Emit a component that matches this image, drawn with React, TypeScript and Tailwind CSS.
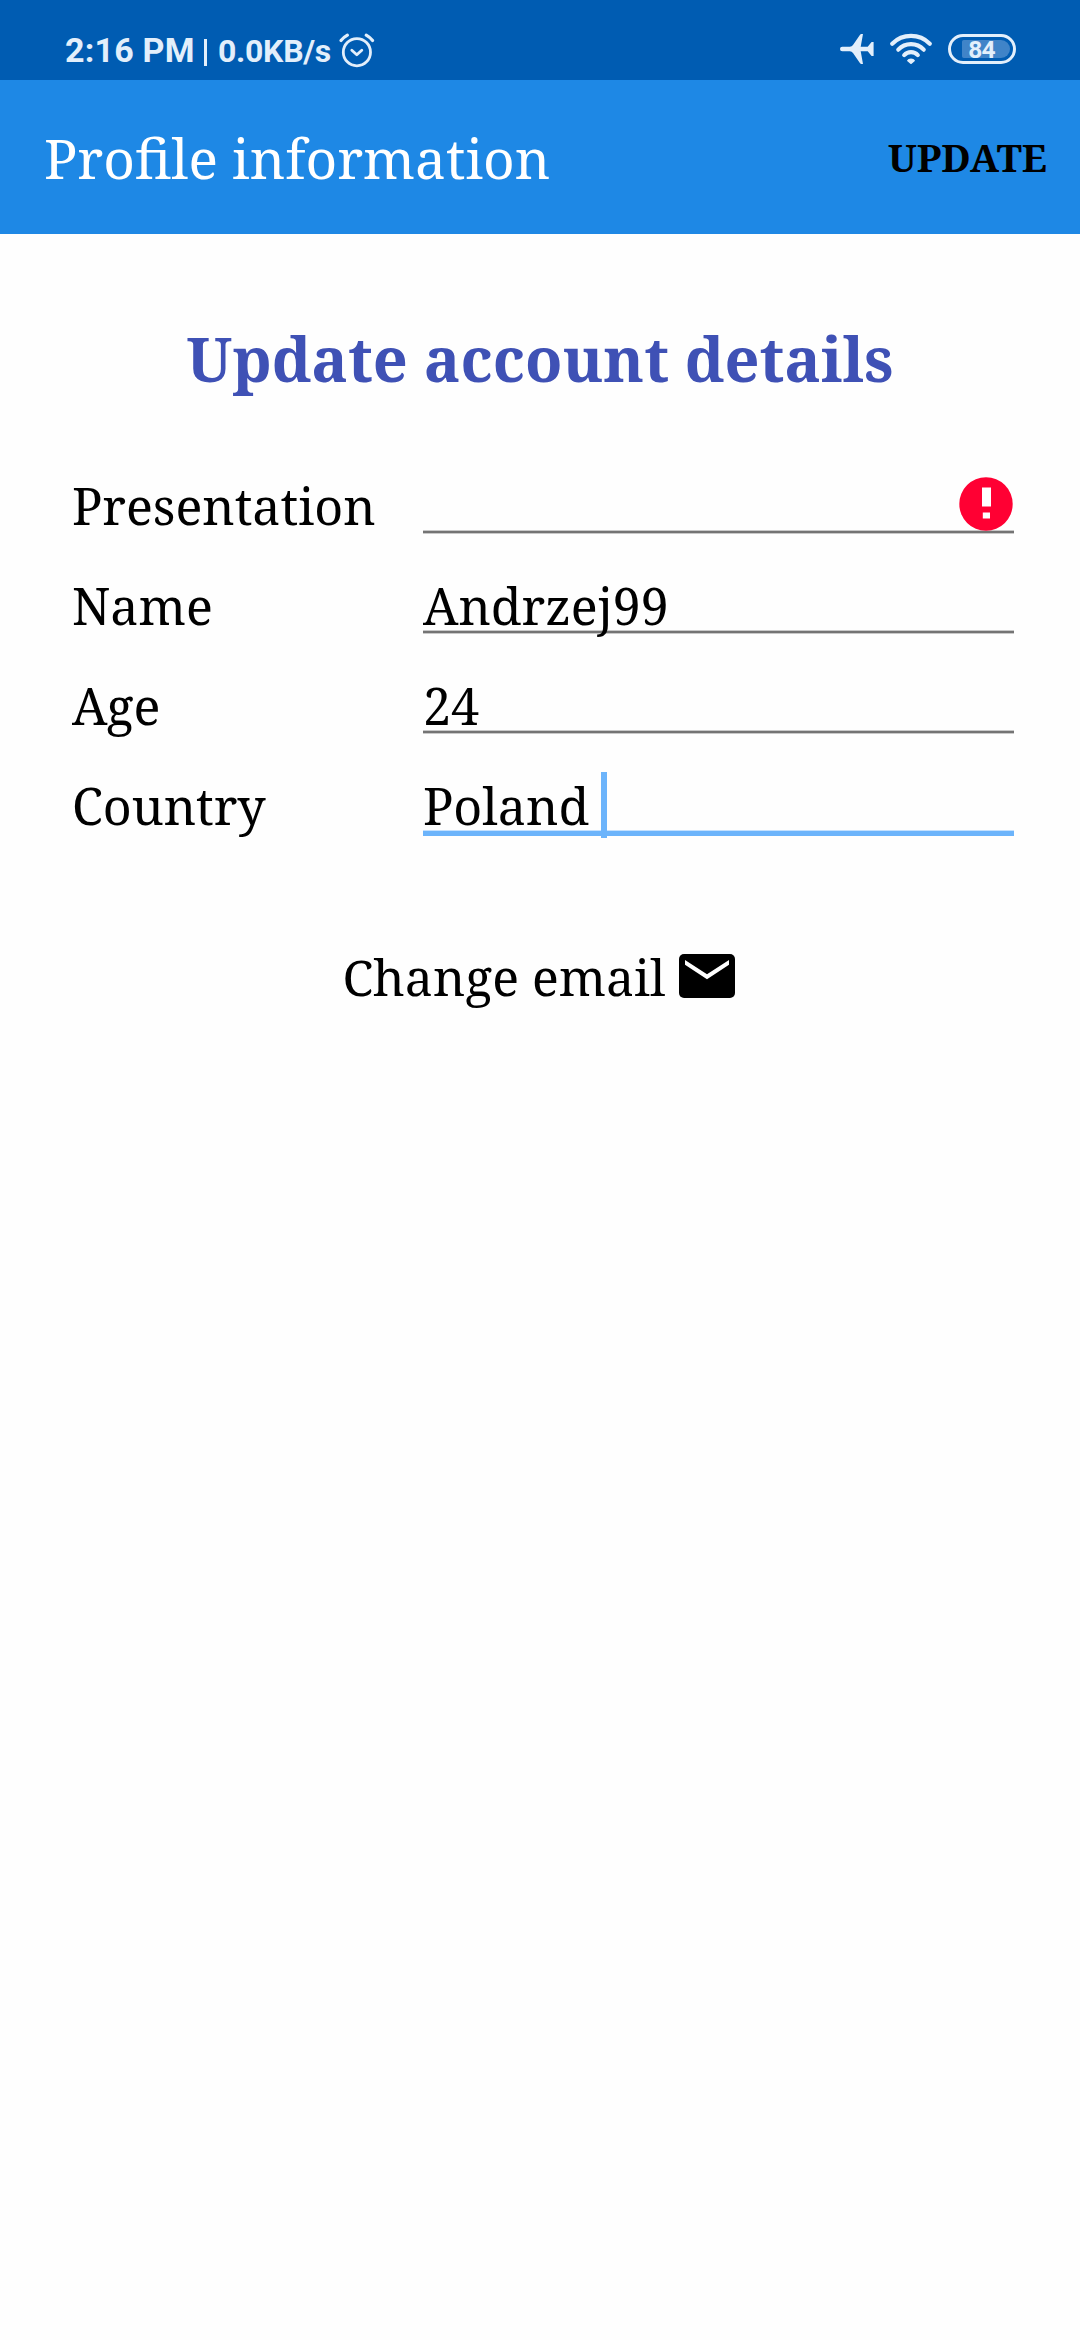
import type { ReactNode } from "react";

function AlarmIcon() {
  return (
    <svg className="h-[38px] w-[38px]" viewBox="0 0 38 38" fill="none" stroke="#e3effb" strokeLinecap="round" strokeLinejoin="round">
      <circle cx="18.9" cy="21.2" r="13.6" strokeWidth="2.8" />
      <path d="M13.8 19.2l5 4.6 5-4.6" strokeWidth="2.8" />
      <path d="M3 9.6a21 21 0 0 1 6.4-5.4M34.6 9.6a21 21 0 0 0-6.4-5.4" strokeWidth="3.2" />
    </svg>
  );
}

function PlaneIcon() {
  return (
    <svg className="h-[32px] w-[36px]" viewBox="0 0 36 32" fill="#e3effb">
      <path d="M3.300 13.700h7.500q2 0 3.200-1.800L20.700 2.200q.8-1.200 1.800-1.200h1.500l-2.300 12.700h7L32.600 9h2v14h-2l-3.900-4.700h-7L24 31h-1.500q-1 0-1.800-1.200L14 20.100q-1.200-1.800-3.200-1.800H3.300a2.300 2.300 0 0 1 0-4.600z" />
    </svg>
  );
}

function WifiIcon() {
  return (
    <svg className="h-[32px] w-[44px]" viewBox="0 0 44 32" fill="none" stroke="#e3effb" strokeWidth="4.200" strokeLinecap="round">
      <path d="M3.200 10.700a26.600 26.600 0 0 1 37.600 0" />
      <path d="M9.300 16.700a17.200 17.200 0 0 1 25.400 0" />
      <path d="M15.200 22.100a9.400 9.400 0 0 1 13.600 0" />
      <path d="M22 30l-2.900-2.400c.8-1.600 5-1.600 5.800 0z" fill="#e3effb" strokeWidth="2" strokeLinejoin="round" />
    </svg>
  );
}

function Battery() {
  return (
    <div className="relative mt-px h-[30px] w-[68px] rounded-full border-[3px] border-[#e3effb]">
      <div className="absolute top-[3px] left-[11px] h-[18px] w-[48px] rounded-l-[2px] rounded-r-[10px] bg-[#4084c8]" />
      <div className="absolute inset-0 pr-px text-center text-[24.5px] leading-[25px] font-bold tracking-[-0.8px]">84</div>
    </div>
  );
}

function ErrorIcon() {
  return (
    <svg className="mt-[21px] mr-px ml-auto h-[54px] w-[54px]" viewBox="0 0 54 54">
      <circle cx="27" cy="27" r="26.700" fill="#ff0033" />
      <path d="M23 10.500h9v19h-9zM23.800 35.500h7.200v6h-7.200z" fill="#fff" />
    </svg>
  );
}

function Row({ label, focused, children }: { label: string; focused?: boolean; children?: ReactNode }) {
  return (
    <div className="flex h-[100px]">
      <div className="w-[351px] shrink-0">{label}</div>
      <div className="relative flex w-[591px]">
        {focused ? (
          <div className="absolute top-[74px] left-0 h-[6px] w-full border-t border-[#c4e1ff] bg-[#6cb4fb]" />
        ) : (
          <div className="absolute top-[74px] left-0 h-[4px] w-full border-t border-b border-[#c9c9c9] bg-[#747474]" />
        )}
        <div className="relative flex w-full">{children}</div>
      </div>
    </div>
  );
}

export default function App() {
  return (
    <div className="h-[2340px] w-[1080px] overflow-hidden bg-[#fefefe] font-['Noto_Serif',serif] text-black">
      <div className="flex h-[80px] bg-[#005cb2] font-[Roboto,sans-serif] font-bold text-[#e3effb]">
        <div className="ml-[65px] w-[139px] pt-[30px] text-[34px] leading-[40px] tracking-[0.2px] whitespace-nowrap">2:16 PM</div>
        <div className="mt-[39px] mr-[11px] h-[27px] w-[3px] bg-[#e3effb]" />
        <div className="w-[120px] pt-[31px] text-[32px] leading-[40px] tracking-[-0.3px] whitespace-nowrap">0.0KB/s</div>
        <div className="pt-[31px]"><AlarmIcon /></div>
        <div className="mr-[64px] ml-auto flex pt-[33px]">
          <PlaneIcon />
          <div className="ml-[14px]"><WifiIcon /></div>
          <div className="ml-[15px]"><Battery /></div>
        </div>
      </div>
      <header className="flex h-[154px] justify-between bg-[#1e88e5] pr-[33px] pl-[44px]">
        <h1 className="text-[55px] leading-[156px] font-normal text-white">Profile information</h1>
        <button className="text-[38.5px] leading-[154px] font-bold">UPDATE</button>
      </header>
      <main>
        <h2 className="pt-[75px] text-center text-[61.2px] leading-[100px] font-bold text-[#3f51b5]">Update account details</h2>
        <div className="mt-[47px] pl-[72px] text-[50.2px] leading-[100px]">
          <Row label="Presentation"><ErrorIcon /></Row>
          <Row label="Name">Andrzej99</Row>
          <Row label="Age">24</Row>
          <Row label="Country" focused>
            Poland
            <div className="mt-[16px] ml-[12px] h-[66px] w-[6px] bg-[#6cb4fb]" />
          </Row>
        </div>
        <div className="mt-[71px] flex justify-center pr-[3px] text-[50px] leading-[100px]">
          <span>Change email</span>
          <svg className="mt-[27px] ml-[13px] h-[44px] w-[56px]" viewBox="0 0 56 44">
            <rect width="56" height="44" rx="5" />
            <path d="M6 6l22 14.300L50 6v4.700L28 25.300 6 10.700z" fill="#fff" />
          </svg>
        </div>
      </main>
    </div>
  );
}
